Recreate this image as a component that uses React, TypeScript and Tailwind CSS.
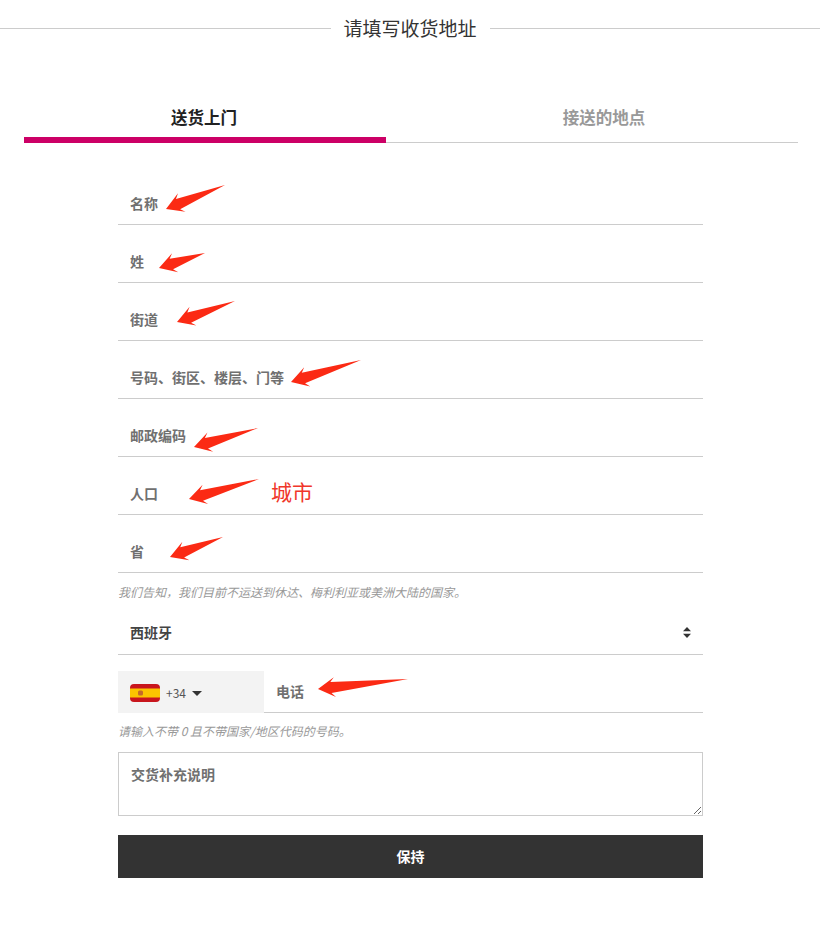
import React from "react";

const font = "font-['Noto_Sans_CJK_SC','Noto_Sans',sans-serif]";

const fields = ["名称", "姓", "街道", "号码、街区、楼层、门等", "邮政编码", "人口", "省"];

// red annotation arrows drawn over the form: tail x,y then tip x,y
const arrows = [
  [225, 185, 166, 209],
  [205, 253, 159, 268],
  [235, 301, 177, 322],
  [361, 360, 291, 382],
  [258, 428, 194, 447],
  [259, 479, 189, 499],
  [223, 537, 170, 557],
  [408, 679, 318, 689],
];

function arrowPoints([x1, y1, x2, y2]: number[]) {
  const len = Math.hypot(x2 - x1, y2 - y1);
  const ux = (x2 - x1) / len;
  const uy = (y2 - y1) / len;
  const at = (back: number, side: number) =>
    `${x2 - ux * back - uy * side},${y2 - uy * back + ux * side}`;
  return [
    `${x1},${y1}`,
    at(13, 5.5),
    at(17, 10),
    `${x2},${y2}`,
    at(17, -10),
    at(13, -5.5),
  ].join(" ");
}

function Field({ label }: { label: string }) {
  return (
    <input
      type="text"
      placeholder={label}
      className="block h-[58px] w-full border-b border-[#ccc] px-3 pt-[14px] text-sm font-bold text-[#707070] outline-none placeholder:text-[#707070]"
    />
  );
}

export default function App() {
  return (
    <div className={`relative h-[929px] w-[820px] overflow-hidden bg-white ${font}`}>
      <div className="flex items-center pt-[14px]">
        <div className="h-px flex-1 bg-[#ccc]" />
        <h2 className="px-[13px] text-[19px] leading-[28px] font-normal text-[#333]">请填写收货地址</h2>
        <div className="h-px flex-1 bg-[#ccc]" />
      </div>

      <div className="mt-[52px] ml-6 flex w-[774px] border-b border-[#ccc]">
        <div className="relative h-[48px] w-[362px] pt-[10px] pr-[2px] text-center text-[16.5px] leading-[26px] font-bold text-[#222]">
          送货上门
          <div className="absolute right-0 -bottom-px left-0 h-[6px] bg-[#cc0066]" />
        </div>
        <div className="h-[48px] flex-1 pt-[10px] pl-[24px] text-center text-[16.5px] leading-[26px] font-bold text-[#999]">
          接送的地点
        </div>
      </div>

      <form className="mx-[118px] mt-[24px] w-[585px]">
        {fields.map((f) => (
          <Field key={f} label={f} />
        ))}
        <p className="mt-[10px] text-xs leading-[18px] text-[#999] italic">
          我们告知，我们目前不运送到休达、梅利利亚或美洲大陆的国家。
        </p>

        <div className="relative mt-[3px]">
          <select className="block h-[51px] w-full appearance-none border-b border-[#ccc] bg-white px-3 pt-[5px] text-sm font-bold text-[#444] outline-none">
            <option>西班牙</option>
          </select>
          <svg viewBox="0 0 8 11" className="pointer-events-none absolute top-[23px] right-[12px] h-[11px] w-2 fill-[#333]">
            <path d="M4 0 8 4.3H0ZM4 11 0 6.7H8Z" />
          </svg>
        </div>

        <div className="mt-[16px] flex h-[42px]">
          <div className="flex w-[146px] items-center bg-[#f3f3f3] pt-[1px] pl-3 text-xs text-[#555]">
            <svg viewBox="0 0 30 18" className="mt-[1px] h-[18px] w-[30px]">
              <rect width="30" height="18" rx="4" fill="#c8161d" />
              <rect y="4.5" width="30" height="9" fill="#fcc400" />
              <rect x="8" y="6.5" width="5" height="5" rx="1.5" fill="#c4692b" />
            </svg>
            <span className="ml-[6px]">+34</span>
            <span className="mt-[1px] ml-[6px] h-0 w-0 border-x-[5px] border-t-[5px] border-x-transparent border-t-[#333]" />
          </div>
          <input
            type="text"
            placeholder="电话"
            className="min-w-0 flex-1 border-b border-[#ccc] px-3 pb-[2px] text-sm font-bold text-[#707070] outline-none placeholder:text-[#707070]"
          />
        </div>
        <p className="mt-[9px] text-xs leading-[18px] text-[#999] italic">
          请输入不带 0 且不带国家/地区代码的号码。
        </p>

        <textarea
          placeholder="交货补充说明"
          className="mt-[12px] block h-[64px] w-full border border-[#ccc] px-3 py-[11px] text-sm leading-[20px] font-bold text-[#707070] outline-none placeholder:text-[#707070]"
        />

        <button type="button" className="mt-[19px] block h-[43px] w-full bg-[#333] pb-[2px] text-sm font-bold text-white">
          保持
        </button>
      </form>

      {/* annotations pasted on top of the screenshot */}
      <svg viewBox="0 0 820 929" className="pointer-events-none absolute inset-0 h-[929px] w-[820px]">
        {arrows.map((a) => (
          <polygon key={a.join()} points={arrowPoints(a)} fill="#fb2a14" />
        ))}
      </svg>
      <span className="absolute top-[476px] left-[271px] text-[21px] leading-[30px] text-[#f0362a]">城市</span>
    </div>
  );
}
